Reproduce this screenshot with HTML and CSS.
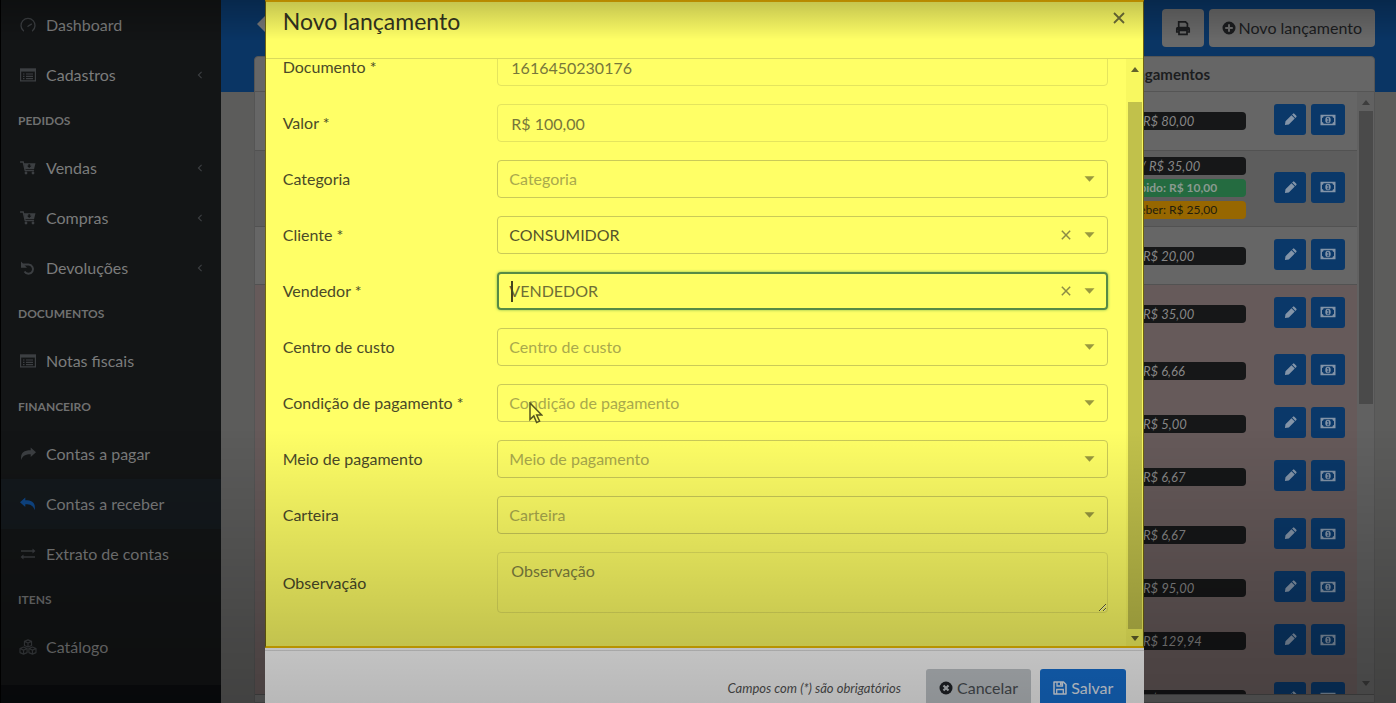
FILE: index.html
```
<!DOCTYPE html>
<html lang="pt-BR">
<head>
  <meta charset="UTF-8">
  <meta name="viewport" content="width=device-width, initial-scale=1.0">
  <title>Contas a receber</title>
  <link rel="stylesheet" href="styles.css">
</head>
<body>
  <!-- Icon sprite -->
  <svg class="sprite" aria-hidden="true">
    <symbol id="i-gauge" viewBox="0 0 16 16"><path d="M3.5 13.8A7 7 0 1 1 12.5 13.8M8 9.3l3.4-2.2" fill="none" stroke="currentColor" stroke-width="1.3" stroke-linecap="round"/></symbol>
    <symbol id="i-list" viewBox="0 0 16 14"><path d="M.6 1.2h14.8v11.6H.6z" fill="none" stroke="currentColor" stroke-width="1.2"/><path d="M0 .6h16v3H0z" fill="currentColor"/><path d="M3 6h1.500M6 6h7M3 8.300h1.500M6 8.300h7M3 10.600h1.500M6 10.600h7" stroke="currentColor" stroke-width="1.2"/></symbol>
    <symbol id="i-cart" viewBox="0 0 16 14"><path d="M.5 1h2.700l2 8.700h8.300" fill="none" stroke="currentColor" stroke-width="1.3" stroke-linecap="round"/><path d="M3.800 2.200H15.500L14 8.200H5.200zM8.300 3.300v1.500H7l2.200 2.300 2.300-2.300h-1.300V3.300z" fill="currentColor" fill-rule="evenodd"/><circle cx="6" cy="12" r="1.400" fill="currentColor"/><circle cx="13" cy="12" r="1.400" fill="currentColor"/></symbol>
    <symbol id="i-undo" viewBox="0 0 16 16"><path d="M2.500 4.600h6a4.600 4.600 0 1 1-4 7" fill="none" stroke="currentColor" stroke-width="2"/><path d="M1 1.500v6.200h6z" fill="currentColor"/></symbol>
    <symbol id="i-share" viewBox="0 0 16 14"><path d="M16 5.200 10.700.5v2.700C4.500 3.200 0 5 1.300 13.200 2.700 8.500 5.500 7.300 10.700 7.300V10z" fill="currentColor"/></symbol>
    <symbol id="i-reply" viewBox="0 0 16 14"><path d="M0 5.200 5.300.5v2.700C11.500 3.200 16 5 14.700 13.200 13.300 8.500 10.500 7.300 5.300 7.300V10z" fill="currentColor"/></symbol>
    <symbol id="i-exchange" viewBox="0 0 16 12"><path d="M1 3h12M3 9h12" stroke="currentColor" stroke-width="1.500"/><path d="M12.500.5 15.500 3l-3 2.500zM3.500 6.500.5 9l3 2.500z" fill="currentColor"/></symbol>
    <symbol id="i-cubes" viewBox="0 0 20 18"><path d="M10 1l4 1.700v4.600L10 9 6 7.300V2.700zM6 2.700l4 1.800 4-1.800M10 4.500V9M5 9l4 1.700v4.600L5 17l-4-1.700v-4.600zM1 10.700l4 1.800 4-1.800M5 12.500V17M15 9l4 1.700v4.600L15 17l-4-1.700v-4.600zM11 10.700l4 1.800 4-1.800M15 12.500V17" fill="none" stroke="currentColor" stroke-width="1.300" stroke-linejoin="round"/></symbol>
    <symbol id="i-left" viewBox="0 0 6 10"><path d="M5 1 1 5l4 4" fill="none" stroke="currentColor" stroke-width="1.400"/></symbol>
    <symbol id="i-print" viewBox="0 0 16 16"><path d="M3.700 7.500V1.800h6.800l1.900 1.900v3.800M4 12H1.800V8.800q0-1.300 1.300-1.300h9.800q1.300 0 1.300 1.300V12H12M4 10.500h8v3.800H4z" fill="none" stroke="currentColor" stroke-width="1.700"/><path d="M2 7.500h12v2.800H2z" fill="currentColor"/></symbol>
    <symbol id="i-plus" viewBox="0 0 14 14"><path fill-rule="evenodd" d="M7 .5a6.500 6.500 0 1 1 0 13 6.500 6.500 0 0 1 0-13zM6 3.200V6H3.200v2H6v2.800h2V8h2.800V6H8V3.200z" fill="currentColor"/></symbol>
    <symbol id="i-cancel" viewBox="0 0 14 14"><circle cx="7" cy="7" r="6.500" fill="currentColor"/><path d="M4.500 4.500l5 5M9.500 4.500l-5 5" stroke="#c4c9cd" stroke-width="2.200"/></symbol>
    <symbol id="i-save" viewBox="0 0 14 14"><path d="M1 1h9.500L13 3.500V13H1z" fill="none" stroke="currentColor" stroke-width="1.500" stroke-linejoin="round"/><path d="M4 1v4h5.500V1M3.700 13V8.500h6.600V13" fill="none" stroke="currentColor" stroke-width="1.300"/><path d="M7 1h1.800v3H7z" fill="currentColor"/></symbol>
    <symbol id="i-pencil" viewBox="0 0 14 14"><path d="M1 13l.6-4.200 6.400-6.400 3.600 3.600-6.400 6.400zM8.700 1.700l1-1q.7-.6 1.400 0l2.200 2.200q.6.700 0 1.400l-1 1z" fill="currentColor"/></symbol>
    <symbol id="i-money" viewBox="0 0 16 12"><path fill-rule="evenodd" d="M.5.800h15v10.400H.5zM3.600 2.200Q3.400 3.700 2 3.900v4.200q1.400.2 1.600 1.700h8.800q.2-1.500 1.600-1.700V3.900q-1.400-.2-1.600-1.700z" fill="currentColor"/><ellipse cx="8" cy="6" rx="2.700" ry="3.300" fill="currentColor"/><path d="M7 4.700l1-.6h.2v3.400M7 7.800h2.200" fill="none" stroke="#0a3566" stroke-width=".9"/></symbol>
    <symbol id="i-caret" viewBox="0 0 10 6"><path d="M0 .3h10L5 5.700z" fill="currentColor"/></symbol>
    <symbol id="i-up" viewBox="0 0 8 5"><path d="M0 5h8L4 0z" fill="currentColor"/></symbol>
    <symbol id="i-x" viewBox="0 0 12 12"><path d="M1 1l10 10M11 1 1 11" stroke="currentColor" stroke-width="1.800"/></symbol>
  </svg>

  <div class="app">
    <nav class="sidebar">
      <a class="nav-item" href="#"><svg><use href="#i-gauge"/></svg>Dashboard</a>
      <a class="nav-item" href="#"><svg><use href="#i-list"/></svg>Cadastros<svg class="chevron"><use href="#i-left"/></svg></a>
      <h2 class="nav-title">PEDIDOS</h2>
      <a class="nav-item" href="#"><svg><use href="#i-cart"/></svg>Vendas<svg class="chevron"><use href="#i-left"/></svg></a>
      <a class="nav-item" href="#"><svg><use href="#i-cart"/></svg>Compras<svg class="chevron"><use href="#i-left"/></svg></a>
      <a class="nav-item" href="#"><svg><use href="#i-undo"/></svg>Devoluções<svg class="chevron"><use href="#i-left"/></svg></a>
      <h2 class="nav-title">DOCUMENTOS</h2>
      <a class="nav-item" href="#"><svg><use href="#i-list"/></svg>Notas fiscais</a>
      <h2 class="nav-title">FINANCEIRO</h2>
      <a class="nav-item" href="#"><svg><use href="#i-share"/></svg>Contas a pagar</a>
      <a class="nav-item active" href="#"><svg><use href="#i-reply"/></svg>Contas a receber</a>
      <a class="nav-item" href="#"><svg><use href="#i-exchange"/></svg>Extrato de contas</a>
      <h2 class="nav-title">ITENS</h2>
      <a class="nav-item" href="#"><svg class="wide"><use href="#i-cubes"/></svg>Catálogo</a>
      <div class="sidebar-footer"></div>
    </nav>

    <main class="main">
      <header class="page-header">
        <svg class="back-arrow" viewBox="0 0 14 20"><path d="M0 10 10 0v20z" fill="currentColor"/></svg>
        <button class="btn-light btn-print" type="button" aria-label="Imprimir"><svg><use href="#i-print"/></svg></button>
        <button class="btn-light" type="button"><svg><use href="#i-plus"/></svg>Novo lançamento</button>
      </header>

      <section class="card">
        <div class="card-head"><span>Pagamentos</span></div>
        <div class="card-body">
          <table class="entries">
            <tbody id="entries"></tbody>
          </table>
          <div class="scrollbar">
            <svg><use href="#i-up"/></svg>
            <div class="track"><div class="thumb"></div></div>
            <svg class="down"><use href="#i-up"/></svg>
          </div>
        </div>
        <div class="card-foot"></div>
      </section>
    </main>
  </div>

  <div class="modal-wrap">
    <form class="modal">
      <div class="highlight">
        <header class="modal-header">
          <h1>Novo lançamento</h1>
          <button class="close" type="button" aria-label="Fechar"><svg><use href="#i-x"/></svg></button>
        </header>
        <div class="modal-body">
          <div class="fields">
            <div class="field"><label for="documento">Documento *</label><input id="documento" class="control" type="text" value="1616450230176"></div>
            <div class="field"><label for="valor">Valor *</label><input id="valor" class="control" type="text" value="R$ 100,00"></div>
            <div class="field"><label for="categoria">Categoria</label>
              <div class="select empty"><select id="categoria"><option>Categoria</option></select><svg class="caret"><use href="#i-caret"/></svg></div></div>
            <div class="field"><label for="cliente">Cliente *</label>
              <div class="select"><select id="cliente"><option>CONSUMIDOR</option></select><button class="clear" type="button" aria-label="Limpar cliente"><svg><use href="#i-x"/></svg></button><svg class="caret"><use href="#i-caret"/></svg></div></div>
            <div class="field"><label for="vendedor">Vendedor *</label>
              <div class="select open"><select id="vendedor"><option>VENDEDOR</option></select><span class="text-cursor"></span><button class="clear" type="button" aria-label="Limpar vendedor"><svg><use href="#i-x"/></svg></button><svg class="caret"><use href="#i-caret"/></svg></div></div>
            <div class="field"><label for="centro">Centro de custo</label>
              <div class="select empty"><select id="centro"><option>Centro de custo</option></select><svg class="caret"><use href="#i-caret"/></svg></div></div>
            <div class="field"><label for="condicao">Condição de pagamento *</label>
              <div class="select empty"><select id="condicao"><option>Condição de pagamento</option></select><svg class="caret"><use href="#i-caret"/></svg>
                <svg class="pointer" viewBox="0 0 14 22"><path d="M1 1v16.500l3.800-3.600L7.600 20.500l3-1.300-2.900-6.200h5z" fill="#ffff66" stroke="#55551f" stroke-width="1.500"/></svg>
              </div></div>
            <div class="field"><label for="meio">Meio de pagamento</label>
              <div class="select empty"><select id="meio"><option>Meio de pagamento</option></select><svg class="caret"><use href="#i-caret"/></svg></div></div>
            <div class="field"><label for="carteira">Carteira</label>
              <div class="select empty"><select id="carteira"><option>Carteira</option></select><svg class="caret"><use href="#i-caret"/></svg></div></div>
            <div class="field"><label for="obs">Observação</label><textarea id="obs" class="control" placeholder="Observação"></textarea></div>
          </div>
          <div class="scrollbar modal-scroll">
            <svg><use href="#i-up"/></svg>
            <div class="track"><div class="thumb"></div></div>
            <svg class="down"><use href="#i-up"/></svg>
          </div>
        </div>
      </div>
      <footer class="modal-footer">
        <em>Campos com (*) são obrigatórios</em>
        <button class="btn btn-cancel" type="button"><svg><use href="#i-cancel"/></svg>Cancelar</button>
        <button class="btn btn-save" type="submit"><svg><use href="#i-save"/></svg>Salvar</button>
      </footer>
    </form>
  </div>
  <div class="shade"></div>

  <script>
    const entries = [
      { total: '80,00', row: 'plain' },
      { total: '35,00', row: 'partial', paid: '10,00', due: '25,00' },
      { total: '20,00', row: 'plain' },
      { total: '35,00', row: 'late' },
      { total: '6,66', row: 'late short' },
      { total: '5,00', row: 'late short' },
      { total: '6,67', row: 'late' },
      { total: '6,67', row: 'late short' },
      { total: '95,00', row: 'late short' },
      { total: '129,94', row: 'late' },
      { total: '129,94', row: 'late' }
    ];

    const badge = (type, prefix, value) =>
      `<span class="badge ${type}"><span class="prefix">${prefix}&nbsp;</span>R$ ${value}</span>`;

    document.getElementById('entries').innerHTML = entries.map(e => `
      <tr class="${e.row}">
        <td class="payments">
          ${badge('total', 'Total /', e.total)}
          ${e.paid ? badge('paid', 'Recebido:', e.paid) + badge('due', 'A receber:', e.due) : ''}
        </td>
        <td class="actions">
          <div class="action-group">
            <button type="button" aria-label="Editar"><svg><use href="#i-pencil"/></svg></button>
            <button type="button" aria-label="Pagamento" class="pay"><svg><use href="#i-money"/></svg></button>
          </div>
        </td>
      </tr>`).join('');
  </script>
</body>
</html>
```
FILE: styles.css
```
* {
  box-sizing: border-box;
}
body {
  margin: 0;
  height: 100vh;
  overflow: hidden;
  font-family: Lato, "Open Sans", sans-serif;
  font-size: 16px;
  line-height: 24px;
  background: #5c5c5b;
}
button, input, select, textarea {
  font: inherit;
  color: inherit;
}
button {
  cursor: pointer;
}
svg {
  display: block;
  flex: none;
}
.sprite {
  display: none;
}
.app {
  display: flex;
  height: 100vh;
}

/* Sidebar */
.sidebar {
  width: 221px;
  flex: none;
  display: flex;
  flex-direction: column;
  background: #131516;
  border-left: 1px solid #000;
  overflow: hidden;
}
.nav-item {
  display: flex;
  align-items: center;
  flex: none;
  height: 50px;
  padding: 0 18px 1px 19px;
  color: #7b7c7c;
  text-decoration: none;
}
.nav-item svg {
  width: 16px;
  height: 16px;
  margin-right: 10px;
  color: #3c3f42;
}
.nav-item .wide {
  width: 20px;
  margin: 0 8px 0 -2px;
}
.nav-item .chevron {
  width: 6px;
  height: 8px;
  margin: 0 0 0 auto;
}
.nav-item.active {
  background: #14191d;
}
.nav-item.active svg {
  color: #0f4686;
}
.nav-title {
  flex: none;
  height: 43px;
  margin: 0;
  padding: 9px 17px;
  font-size: 12px;
  line-height: 24px;
  font-weight: 700;
  color: #6f7070;
}
.sidebar-footer {
  flex: 1;
  margin-top: 13px;
  background: #0b0d10;
}

/* Page */
.main {
  flex: 1;
  min-width: 0;
  display: flex;
  flex-direction: column;
  padding: 0 21px 0 33px;
  background: linear-gradient(#0a3564 92px, #5c5c5b 92px);
}
.page-header {
  display: flex;
  align-items: center;
  gap: 5px;
  flex: none;
  height: 56px;
}
.back-arrow {
  width: 14px;
  height: 20px;
  margin: 0 auto 8px 3px;
  color: #777;
}
.btn-light {
  display: flex;
  align-items: center;
  gap: 3px;
  height: 38px;
  padding: 0 13px;
  border: 0;
  border-radius: 4px;
  background: #696969;
  color: #1b1c1e;
}
.btn-light svg {
  width: 14px;
  height: 14px;
}
.btn-print svg {
  width: 16px;
  height: 16px;
}
.card {
  flex: 1;
  min-height: 0;
  display: flex;
  flex-direction: column;
  border: 1px solid #555;
  border-radius: 4px 4px 0 0;
  background: #666;
}
.card-head {
  flex: none;
  display: flex;
  justify-content: flex-end;
  height: 35px;
  padding-right: 164px;
  border-bottom: 1px solid #555;
  line-height: 34px;
  font-size: 15px;
  font-weight: 700;
  color: #1c1d1f;
}
.card-body {
  flex: 1;
  min-height: 0;
  display: flex;
  overflow: hidden;
}
.card-foot {
  flex: none;
  height: 8px;
  border-top: 1px solid #4c4c4c;
}
.entries {
  flex: 1;
  height: max-content;
  border-collapse: collapse;
}
.entries tr {
  height: 58px;
}
.entries tr.short {
  height: 53px;
}
.entries tr.partial {
  height: 76px;
  background: #5d5d5d;
}
.entries tr.late {
  background: #665a5a;
}
.entries .plain,
.entries .partial {
  border-bottom: 1px solid #525252;
}
.entries td {
  padding: 0;
  vertical-align: top;
}
.entries .payments {
  padding-top: 20px;
}
.entries .partial .payments {
  padding-top: 6px;
}
.badge {
  display: block;
  width: 160px;
  height: 18px;
  margin: 0 0 4px auto;
  border-radius: 4px;
  font-size: 13px;
  line-height: 18px;
  white-space: nowrap;
}
.badge.total {
  background: #161718;
  color: #868686;
  font-style: italic;
}
.badge.paid {
  background: #246b40;
  color: #8a9a90;
  font-size: 12px;
  font-weight: 700;
}
.badge.due {
  background: #976700;
  color: #231d0c;
  font-size: 12px;
}
.prefix {
  display: inline-block;
  width: 57px;
  text-align: right;
}
.partial .prefix {
  width: 63px;
}
.partial .paid .prefix,
.partial .due .prefix {
  width: 83px;
}
.entries .actions {
  width: 111px;
  padding-top: 12px;
}
.entries .partial .actions {
  padding-top: 21px;
}
.action-group {
  display: flex;
  gap: 5px;
  padding-left: 28px;
}
.action-group button {
  display: flex;
  align-items: center;
  justify-content: center;
  width: 32px;
  height: 31px;
  padding: 0;
  border: 0;
  border-radius: 3px;
  background: #0a3869;
  color: #8394a8;
}
.action-group .pay {
  width: 34px;
}
.action-group svg {
  width: 13px;
  height: 13px;
}
.action-group .pay svg {
  width: 16px;
  height: 12px;
}

/* Scrollbars */
.scrollbar {
  flex: none;
  display: flex;
  flex-direction: column;
  align-items: center;
  width: 17px;
  padding: 8px 0;
  background: #616161;
  color: #3d3d3d;
}
.scrollbar svg {
  width: 8px;
  height: 5px;
}
.scrollbar .down {
  transform: rotate(180deg);
}
.scrollbar .track {
  flex: 1;
  width: 14px;
  margin: 6px 0;
}
.scrollbar .thumb {
  height: 52%;
  background: #4a4a4a;
}

/* Modal */
.modal-wrap {
  position: fixed;
  inset: 0;
  display: flex;
  justify-content: center;
  align-items: flex-start;
  padding-left: 13px;
}
.modal {
  width: 63.6%;
  background: #fff;
  color: #4a4a28;
}
.highlight {
  background: #ffff66;
  border: 1px solid #6f6410;
  border-top: 2px solid #f0b400;
  border-bottom: 2px solid #f0c000;
}
.modal-header {
  display: flex;
  justify-content: space-between;
  align-items: flex-start;
  height: 57px;
  padding: 4px 17px;
  border-bottom: 1px solid #dada5c;
}
.modal-header h1 {
  margin: 0;
  font-size: 23px;
  line-height: 30px;
  font-weight: 400;
  color: #33341f;
}
.close {
  padding: 6px 1px;
  border: 0;
  background: none;
  color: #6f6f38;
}
.close svg {
  width: 12px;
  height: 12px;
}
.modal-body {
  display: flex;
  overflow: hidden;
}
.fields {
  flex: 1;
  display: flex;
  flex-direction: column;
  gap: 18px;
  margin-top: -11px;
  padding: 0 18px 33px 17px;
}
.field {
  display: grid;
  grid-template-columns: 26% 1fr;
  align-items: center;
}
.control {
  width: 100%;
  height: 38px;
  padding: 0 13px;
  border: 1px solid #e4e45e;
  border-radius: 4px;
  background: transparent;
  color: #77773a;
  outline: 0;
}
textarea.control {
  display: block;
  height: 61px;
  padding: 6px 13px;
}
.control::placeholder {
  color: #82823f;
}
.select {
  position: relative;
  display: flex;
  align-items: center;
  height: 38px;
  padding-right: 12px;
  border: 1px solid #caca58;
  border-radius: 4px;
  color: #55552b;
}
.select select {
  flex: 1;
  height: 36px;
  padding: 0 11px;
  border: 0;
  appearance: none;
  background: none;
  outline: 0;
}
.select.empty select {
  color: #a9a94c;
}
.select.open {
  border: 2px solid #568a45;
  box-shadow: 0 0 3px #7cb84e;
  padding-right: 11px;
}
.select.open select {
  padding: 0 10px;
  color: #6e6e35;
}
.caret {
  width: 11px;
  height: 6px;
  color: #99993f;
}
.clear {
  padding: 4px;
  margin-right: 9px;
  border: 0;
  background: none;
  color: #8c8c45;
}
.clear svg {
  width: 10px;
  height: 10px;
}
.text-cursor {
  position: absolute;
  left: 12px;
  top: 7px;
  width: 2px;
  height: 21px;
  background: #44441f;
}
.pointer {
  position: absolute;
  left: 31px;
  top: 17px;
  width: 14px;
  height: 22px;
}
.modal-scroll {
  padding: 8px 0 5px;
  background: #f8f860;
  color: #62622c;
}
.modal-scroll .track {
  margin: 30px 0 7px;
}
.modal-scroll .thumb {
  height: 100%;
  background: #c1c14b;
}
.modal-footer {
  display: flex;
  align-items: center;
  justify-content: flex-end;
  gap: 9px;
  margin-top: 2px;
  padding: 18px;
  border-top: 1px solid #dcdcdc;
}
.modal-footer em {
  margin-right: 16px;
  font-size: 13px;
  color: #555;
}
.btn {
  display: flex;
  align-items: center;
  gap: 4px;
  height: 38px;
  padding: 0 13px;
  border: 0;
  border-radius: 3px;
}
.btn svg {
  width: 14px;
  height: 14px;
}
.btn-cancel {
  background: #c4c9cd;
  color: #4c5156;
}
.btn-cancel svg {
  color: #202328;
}
.btn-save {
  background: #1672d6;
  color: #e8f0fa;
}

/* Darkening at the top and bottom edges of the window */
.shade {
  position: fixed;
  inset: 0;
  pointer-events: none;
  background:
    linear-gradient(rgba(0, 0, 0, .24), rgba(0, 0, 0, 0) 40px),
    linear-gradient(rgba(0, 0, 0, 0) 61%, rgba(0, 0, 0, .23) 91%, rgba(0, 0, 0, .28));
}
```
